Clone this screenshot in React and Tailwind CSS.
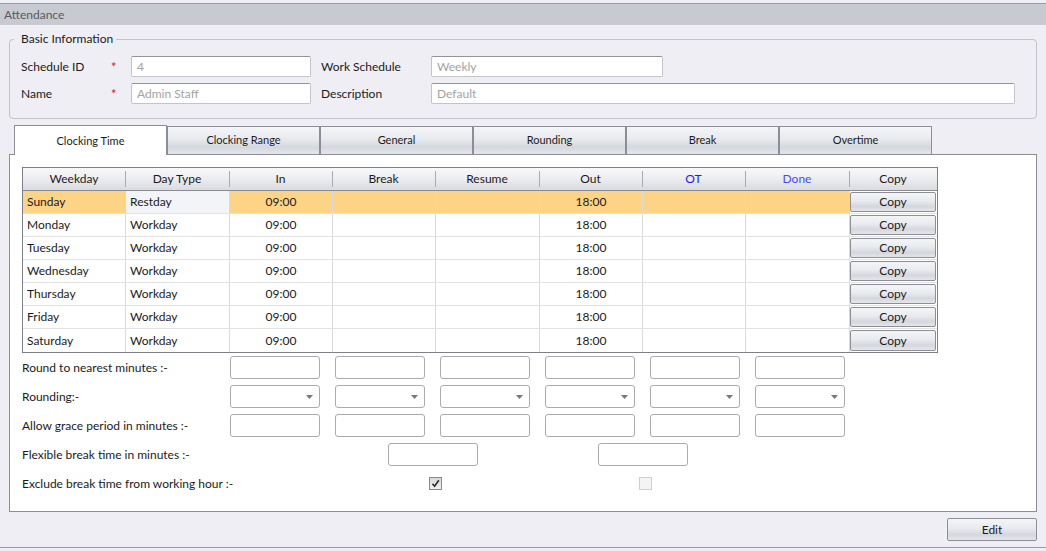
const FONT = "font-['Lato','Segoe_UI','Noto_Sans',sans-serif]";

const btnGrad =
  'bg-[linear-gradient(to_bottom,#f4f5f7_0%,#e8eaee_45%,#d4d7de_75%,#e4e6ea_100%)]';
const headGrad = 'bg-[linear-gradient(to_bottom,#f8f8fa_0%,#ecedf0_50%,#d9dbe0_100%)]';
const cols = 'grid-cols-[102px_104px_103px_103px_104px_103px_103px_104px_88px]';

const days = [
  { day: 'Sunday', type: 'Restday' },
  { day: 'Monday', type: 'Workday' },
  { day: 'Tuesday', type: 'Workday' },
  { day: 'Wednesday', type: 'Workday' },
  { day: 'Thursday', type: 'Workday' },
  { day: 'Friday', type: 'Workday' },
  { day: 'Saturday', type: 'Workday' }
];

const columns = [
  ['Weekday', 'text-[#1b1b1b]'],
  ['Day Type', 'text-[#1b1b1b]'],
  ['In', 'text-[#1b1b1b]'],
  ['Break', 'text-[#1b1b1b]'],
  ['Resume', 'text-[#1b1b1b]'],
  ['Out', 'text-[#1b1b1b]'],
  ['OT', 'text-[#1a1aff]'],
  ['Done', 'text-[#4a4aff]'],
  ['Copy', 'text-[#1b1b1b]']
];

const tabs = ['Clocking Time', 'Clocking Range', 'General', 'Rounding', 'Break', 'Overtime'];

const TopField = ({ value, width }) => (
  <div
    className={`${width} h-[21px] rounded-[2px] border border-[#c2c4ca] border-t-[#92949b] bg-white px-[5px] text-[12px] leading-[19px] text-[#a3a3a3]`}
  >
    {value}
  </div>
);

const Box = () => (
  <div className="h-[23px] w-[90px] rounded-[3px] border border-[#ababab] bg-white" />
);

const Select = () => (
  <div className="flex h-[23px] w-[90px] items-center justify-end rounded-[3px] border border-[#ababab] bg-white pr-[6px]">
    <svg width="7" height="4" viewBox="0 0 7 4">
      <path d="M0 0h7L3.5 4z" fill="#777" />
    </svg>
  </div>
);

const BelowRow = ({ label, children }) => (
  <div className="flex h-[23px] items-center">
    <div className="w-[208px] whitespace-nowrap text-[12px] text-[#1b1b1b]">{label}</div>
    <div className="grid grid-cols-[repeat(6,90px)] gap-x-[15px]">{children}</div>
  </div>
);

export default function App() {
  return (
    <div className={`${FONT} flex h-[551px] w-[1046px] flex-col overflow-hidden bg-[#eeeef4]`}>
      <div className="h-[3px] bg-[#eeeef4]" />
      <div className="h-[22px] border-t border-[#9a9ca8] bg-[#c8cad2] pl-[4px] text-[12px] leading-[21px] text-[#555a62]">
        Attendance
      </div>

      <fieldset className="mt-[6px] ml-[9px] w-[1028px] rounded-[4px] border border-[#c3c3cb] px-[11px] pt-[9px] pb-[14px]">
        <legend className="-ml-[7px] pl-[7px] pr-[3px] text-[12px] leading-[16px] text-[#1b1b1b]">
          Basic Information
        </legend>
        <div className="flex h-[21px] items-center text-[12px] text-[#1b1b1b]">
          <div className="w-[90px]">Schedule ID</div>
          <div className="w-[20px] pt-[3px] text-[13px] text-[#e02020]">*</div>
          <TopField value="4" width="w-[180px]" />
          <div className="ml-[10px] w-[110px]">Work Schedule</div>
          <TopField value="Weekly" width="w-[232px]" />
        </div>
        <div className="mt-[6px] flex h-[21px] items-center text-[12px] text-[#1b1b1b]">
          <div className="w-[90px]">Name</div>
          <div className="w-[20px] pt-[3px] text-[13px] text-[#e02020]">*</div>
          <TopField value="Admin Staff" width="w-[180px]" />
          <div className="ml-[10px] w-[110px]">Description</div>
          <TopField value="Default" width="w-[584px]" />
        </div>
      </fieldset>

      <div className="relative z-10 mt-[6px] -mb-[1px] ml-[14px] flex h-[30px] items-end">
        {tabs.map((t, i) =>
          i === 0 ? (
            <div
              key={t}
              className="flex h-[30px] w-[153px] items-center justify-center border border-b-0 border-[#8d8d98] bg-white pt-[2px] text-[11px] text-[#1b1b1b]"
            >
              {t}
            </div>
          ) : (
            <div
              key={t}
              className={`mb-[1px] flex h-[28px] w-[153px] items-center justify-center border border-b-0 border-[#8d8d98] ${btnGrad} text-[11px] text-[#1b1b1b]`}
            >
              {t}
            </div>
          )
        )}
      </div>

      <div className="ml-[9px] h-[358px] w-[1028px] border border-[#8d8d98] bg-white pt-[12px] pl-[12px]">
        <div className="w-[916px] border border-[#7f7f88] text-[12px] text-[#1b1b1b]">
          <div className={`grid ${cols} border-b border-[#8a8a92]`}>
            {columns.map(([label, color], i) => (
              <div
                key={label}
                className={`relative flex h-[22px] items-center justify-center ${headGrad} ${color}`}
              >
                {i > 0 && <span className="absolute left-0 top-[3px] bottom-[3px] w-px bg-[#a9abb2]" />}
                {label}
              </div>
            ))}
          </div>
          {days.map((d, r) => {
            const sel = r === 0;
            const bg = sel ? 'bg-[#fdd385]' : 'bg-white';
            const last = r === days.length - 1;
            return (
              <div
                key={d.day}
                className={`grid h-[23px] ${cols} ${last ? 'h-[22px]' : 'border-b border-[#e2e2e2]'}`}
              >
                <div className={`flex items-center pl-[4px] ${bg}`}>{d.day}</div>
                <div className={`flex items-center border-l border-[#dadada] pl-[4px] ${sel ? 'bg-[#f3f4f8]' : 'bg-white'}`}>
                  {d.type}
                </div>
                <div className={`flex items-center justify-center border-l border-[#dadada] ${bg}`}>09:00</div>
                <div className={`border-l border-[#dadada] ${bg}`} />
                <div className={`border-l border-[#dadada] ${bg}`} />
                <div className={`flex items-center justify-center border-l border-[#dadada] ${bg}`}>18:00</div>
                <div className={`border-l border-[#dadada] ${bg}`} />
                <div className={`border-l border-[#dadada] ${bg}`} />
                <div className="border-l border-[#dadada] bg-white p-[1px] pl-0">
                  <div
                    className={`flex h-full items-center justify-center rounded-[2px] border border-[#8e8e97] ${btnGrad}`}
                  >
                    Copy
                  </div>
                </div>
              </div>
            );
          })}
        </div>

        <div className="mt-[3px] flex flex-col gap-[6px]">
          <BelowRow label="Round to nearest minutes :-">
            <Box /><Box /><Box /><Box /><Box /><Box />
          </BelowRow>
          <BelowRow label="Rounding:-">
            <Select /><Select /><Select /><Select /><Select /><Select />
          </BelowRow>
          <BelowRow label="Allow grace period in minutes :-">
            <Box /><Box /><Box /><Box /><Box /><Box />
          </BelowRow>
          <BelowRow label="Flexible break time in minutes :-">
            <div className="col-span-2 col-start-2 justify-self-center">
              <Box />
            </div>
            <div className="col-span-2 col-start-4 justify-self-center">
              <Box />
            </div>
          </BelowRow>
          <BelowRow label="Exclude break time from working hour :-">
            <div className="col-span-2 col-start-2 justify-self-center pl-[5px]">
              <div className="flex h-[13px] w-[13px] items-center justify-center border border-[#8a8a8a] bg-[linear-gradient(to_bottom,#d8d9dc,#f1f1f3)]">
                <svg width="9" height="9" viewBox="0 0 9 9">
                  <path d="M1.5 4.8 3.6 7.2 7.8 1.2" fill="none" stroke="#2a2a2a" strokeWidth="1.6" />
                </svg>
              </div>
            </div>
            <div className="col-span-2 col-start-4 justify-self-center pl-[5px]">
              <div className="h-[13px] w-[13px] border border-[#cfcfcf] bg-[#f4f4f4]" />
            </div>
          </BelowRow>
        </div>
      </div>

      <div className="mt-[6px] mr-[9px] flex justify-end">
        <div
          className={`flex h-[23px] w-[90px] items-center justify-center rounded-[2px] border border-[#8e8e97] ${btnGrad} text-[12px] text-[#1b1b1b]`}
        >
          Edit
        </div>
      </div>
      <div className="mt-[6px] flex-1 border-t border-[#9a9ca8]" />
    </div>
  );
}
